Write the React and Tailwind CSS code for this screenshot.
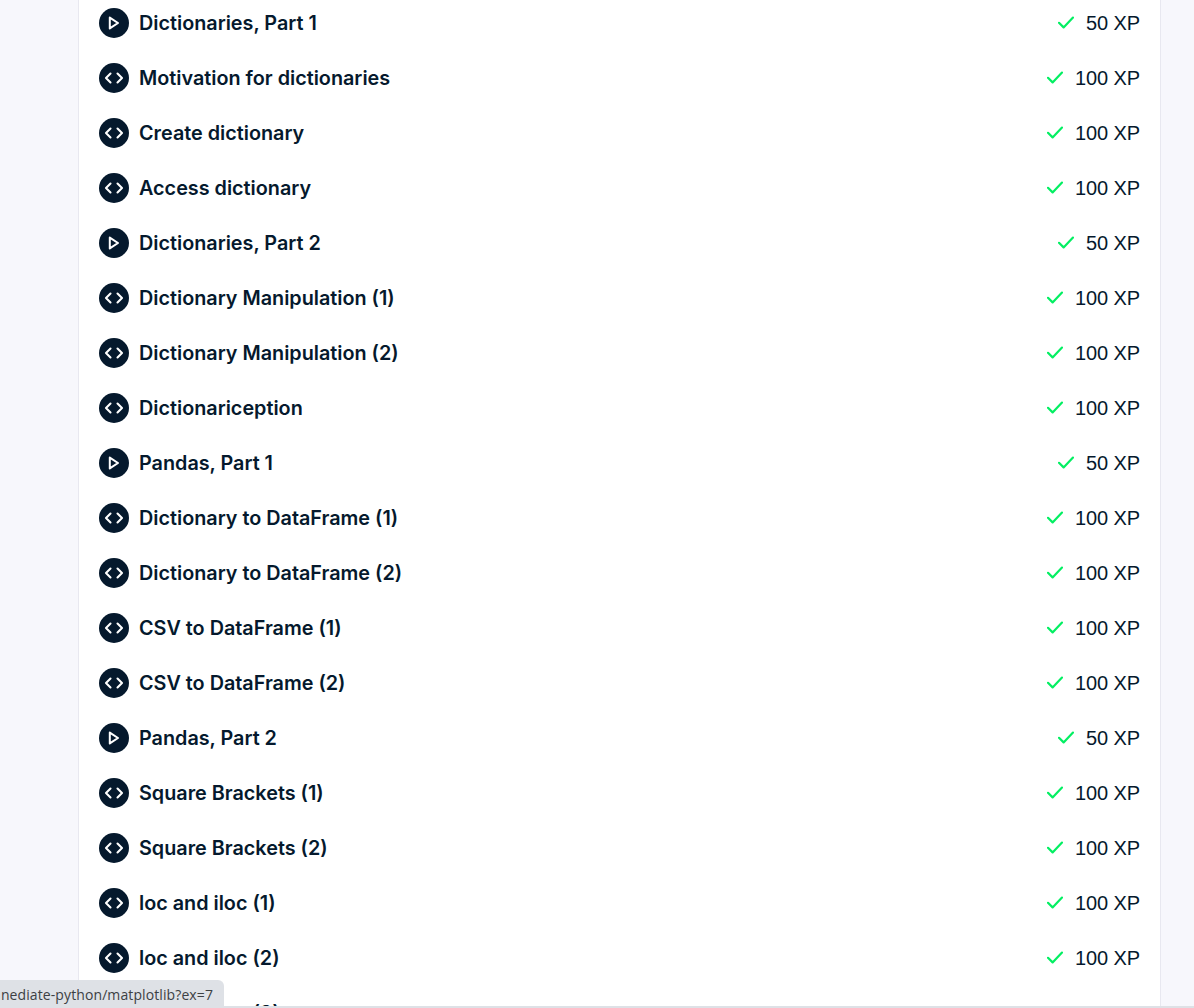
import React from "react";

const lessons = [
  { title: "Dictionaries, Part 1", xp: 50, type: "video" },
  { title: "Motivation for dictionaries", xp: 100, type: "code" },
  { title: "Create dictionary", xp: 100, type: "code" },
  { title: "Access dictionary", xp: 100, type: "code" },
  { title: "Dictionaries, Part 2", xp: 50, type: "video" },
  { title: "Dictionary Manipulation (1)", xp: 100, type: "code" },
  { title: "Dictionary Manipulation (2)", xp: 100, type: "code" },
  { title: "Dictionariception", xp: 100, type: "code" },
  { title: "Pandas, Part 1", xp: 50, type: "video" },
  { title: "Dictionary to DataFrame (1)", xp: 100, type: "code" },
  { title: "Dictionary to DataFrame (2)", xp: 100, type: "code" },
  { title: "CSV to DataFrame (1)", xp: 100, type: "code" },
  { title: "CSV to DataFrame (2)", xp: 100, type: "code" },
  { title: "Pandas, Part 2", xp: 50, type: "video" },
  { title: "Square Brackets (1)", xp: 100, type: "code" },
  { title: "Square Brackets (2)", xp: 100, type: "code" },
  { title: "loc and iloc (1)", xp: 100, type: "code" },
  { title: "loc and iloc (2)", xp: 100, type: "code" },
  { title: "loc and iloc (3)", xp: 100, type: "code" },
];

const LessonIcon = ({ type }) => (
  <div className="w-[30px] h-[30px] rounded-full bg-[#05192d] flex items-center justify-center shrink-0">
    {type === "video" ? (
      <svg width="30" height="30" viewBox="0 0 30 30" fill="none">
        <path d="M10.8 9.6 L19 15 L10.8 20.4 Z" stroke="#fff" strokeWidth="2" strokeLinejoin="round" />
      </svg>
    ) : (
      <svg width="30" height="30" viewBox="0 0 30 30" fill="none">
        <path d="M11.5 10.5 L7 15 L11.5 19.5 M18.5 10.5 L23 15 L18.5 19.5" stroke="#fff" strokeWidth="2.1" strokeLinecap="round" strokeLinejoin="round" />
      </svg>
    )}
  </div>
);

const Check = () => (
  <svg width="16" height="13" viewBox="0 0 16 13" fill="none">
    <path d="M1 6.8 L5.6 11.4 L15 1.6" stroke="#03ef62" strokeWidth="2.2" strokeLinecap="round" strokeLinejoin="round" />
  </svg>
);

const App = () => {
  return (
    <div className="h-screen overflow-hidden bg-[#f7f7fc] relative font-['Inter','Liberation_Sans',sans-serif] text-[#05192d]">
      <div className="ml-[78px] w-[1083px] h-[calc(100%+5px)] bg-white border-x border-[#e8e8f0] px-5 -mt-[5px]">
        {lessons.map((lesson, index) => (
          <div key={index} className="h-[55px] flex items-center">
            <LessonIcon type={lesson.type} />
            <span className="ml-[10px] text-[19.8px] font-semibold leading-none translate-y-px">{lesson.title}</span>
            <div className="ml-auto flex items-center gap-[12px]">
              <Check />
              <span className="text-[20px] leading-none tracking-[-0.1px] font-['Liberation_Sans',sans-serif]">{lesson.xp} XP</span>
            </div>
          </div>
        ))}
      </div>

      {/* Browser status bubble */}
      <div className="absolute left-0 bottom-0 w-[224px] h-[28px] bg-[#dee1e6] rounded-tr-[6px] overflow-hidden flex items-center justify-end pr-[11px] whitespace-nowrap font-['Open_Sans',sans-serif] text-[14px] tracking-[0.1px] text-[#3c4043]">
        nediate-python/matplotlib?ex=7
      </div>
      <div className="absolute left-0 right-0 bottom-0 h-[2px] bg-[#dee1e6]" />
    </div>
  );
};

export default App;
